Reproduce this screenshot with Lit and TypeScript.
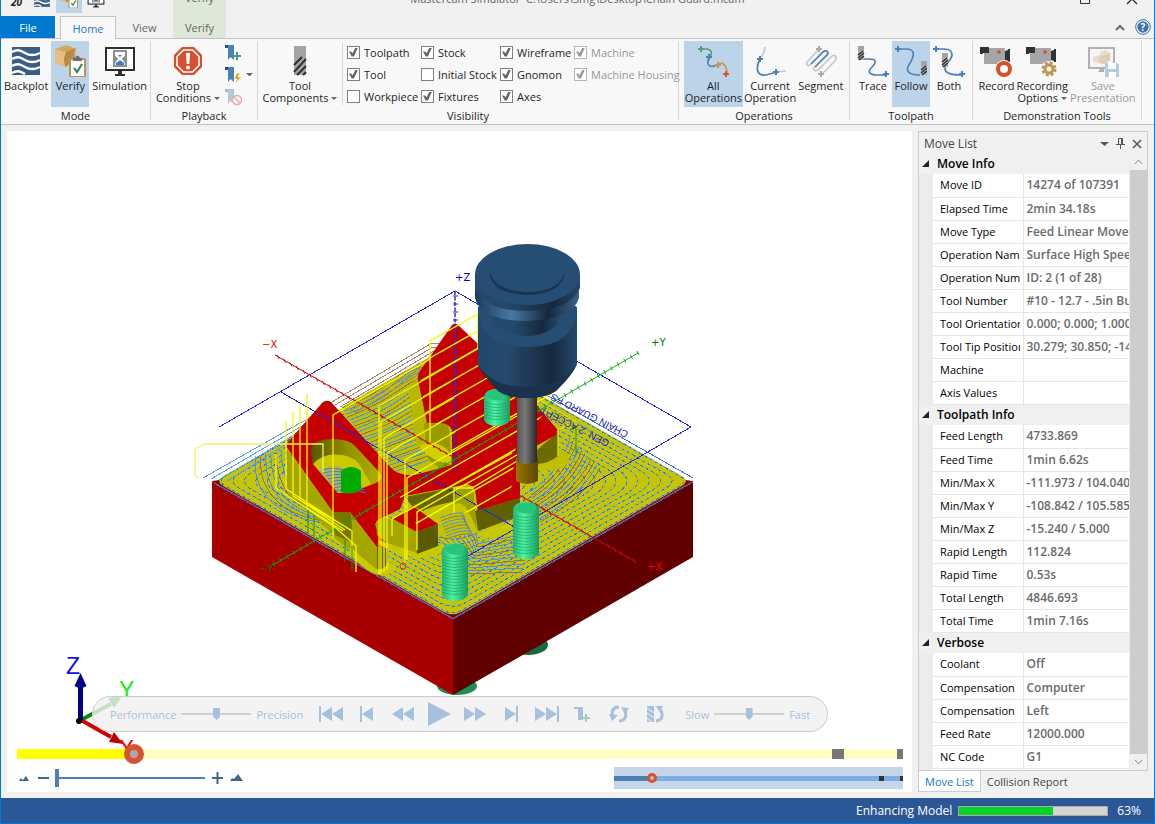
import { LitElement, html, svg, css } from "lit";
import { customElement, property, state } from "lit/decorators.js";
import { classMap } from "lit/directives/class-map.js";

const plus = (x: number, y: number, c: string, r = 3) =>
  svg`<path d="M${x - r} ${y}h${2 * r}M${x} ${y - r}v${2 * r}" stroke=${c} stroke-width="2" fill="none"/>`;

const bit = (x: number, y: number, h = 14) => svg`
  <rect x=${x} y=${y} width="6" height=${h} fill="#a3a3a3"/>
  <rect x=${x} y=${y + 5} width="6" height=${h - 5} fill="#b4b4b4"/>
  <path d="M${x} ${y + 9}l5-4M${x} ${y + 12}l6-5M${x + 1} ${y + h}l5-4" stroke="#333" stroke-width="1.6"/>`;

const camera = svg`
  <rect x="4" y="3" width="21" height="16" rx="1" fill="#a4a6a8"/>
  <path d="M0 2h9v6H3v1H0zM25 6l3-1V4h2v13h-2v-1l-3-1z" fill="#303234"/>
  <circle cx="19" cy="7" r="1.8" fill="#d94a28"/>`;

const bookmark = (o = 1) => svg`
  <g opacity=${o}><path d="M0 0h9v15l-3.500-3-2.500 3V3H0z" fill="#4a81b8"/><path d="M0 0h3v3H0z" fill="#294f78"/></g>`;

const icons: Record<string, unknown> = {
  backplot: svg`<rect x="2" y="2" width="28" height="28" fill="#385e86"/>
    <g fill="none" stroke="#fff" stroke-width="2.400">
    <path d="M2 7c5-3 8-2 13 1s9 3 15 0M2 14c5-3 8-2 13 1s9 3 15 0M2 21c5-3 8-2 13 1s9 3 15 0M2 28c5-3 8-2 13 1"/></g>`,
  verify: svg`<path d="M1 4L13 0l9 4-1 9-9 9-11-4z" fill="#d8a45c"/><path d="M1 4l11 3c0 5-1 5 0 15L1 18z" fill="#e6bd82"/>
    <path d="M12 7L22 3c-3 4-3 7-1 10l-9 9c-3-5-2-10 0-15z" fill="#b98746"/>
    <rect x="16" y="14" width="15" height="18" rx="1" fill="#fff" stroke="#b89555" stroke-width="2"/>
    <path d="M19 15v-2h2c1-3 4-3 5 0h2v3h-9z" fill="#6d6d6d"/><path d="M20 23l3 4 5-8" fill="none" stroke="#3f8468" stroke-width="2.200"/>`,
  simulation: svg`<rect x="2" y="3" width="28" height="22" fill="#fff" stroke="#2d2f32" stroke-width="2"/>
    <path d="M14 26h4v3h3v2H11v-2h3z" fill="#2d2f32"/><rect x="9" y="5" width="14" height="17" fill="#8b8d8f"/>
    <path d="M11 7h10v2c0 3-3 4-3 5s3 2 3 6H11c0-4 3-5 3-6s-3-2-3-5z" fill="#fff"/>
    <path d="M12 18l4-3 4 3v2h-8zM14 10h4l-2 2z" fill="#3d7fc4"/>`,
  stop: svg`<path d="M10 2h12l8 8v12l-8 8H10l-8-8V10z" fill="#d4502f"/>
    <path d="M11.500 5h9l6.500 6.500v9L20.500 27h-9L5 20.500v-9z" fill="none" stroke="#fff" stroke-width="1.600"/>
    <path d="M14 8h4l-.700 11h-2.600z" fill="#fff"/><circle cx="16" cy="22.500" r="2" fill="#fff"/>`,
  tool: svg`<rect x="10" y="1" width="12" height="29" fill="#a2a4a6"/><path d="M10 20l8-8M10 27l12-13M13 30l9-9M19 30l3-3" stroke="#303234" stroke-width="2"/>`,
  all: svg`<g fill="none" stroke-width="1.700"><path d="M4 4h6c6 1 5 6 2 9" stroke="#5c9b82"/>
    <path d="M12 13c-3 6 0 11 8 7" stroke="#4a81b8"/><path d="M20 20c6-4 10 0 10 9" stroke="#c39a4c"/></g>
    ${plus(4, 4, "#5c9b82")}${plus(12, 12, "#4a81b8")}${plus(21, 20, "#c39a4c")}${plus(29, 29, "#e0502c")}`,
  current: svg`<g fill="none" stroke-width="1.700"><path d="M11 2c0 6-3 8-5 12M22 27l10-1" stroke="#c5c8cb"/>
    <path d="M6 14C1 24 3 31 12 30l11-3" stroke="#4a81b8"/></g>${plus(6, 14, "#4a81b8")}${plus(22, 27, "#4a81b8")}`,
  segment: svg`<g fill="none" stroke-width="1.700"><path d="M14 4L3 16c-3 4 0 6 3 3M17 29l13-13c3-5-1-7-4-4L13 25c-4 2-6-1-3-4" stroke="#c5c8cb"/>
    <path d="M6 19L18 7c4-3 7 1 3 4L10 22" stroke="#4a81b8"/></g>${plus(14, 4, "#a9abad")}${plus(16, 29, "#a9abad")}`,
  trace: svg`<path d="M5 14h7c9 0 7 4 2 9-4 5 0 7 6 7h9" fill="none" stroke="#4a81b8" stroke-width="1.700"/>${bit(1, 1)}${plus(29, 29, "#4a81b8")}`,
  follow: svg`<path d="M3 4h8c9 0 9 6 4 14-5 7-3 12 10 12" fill="none" stroke="#4a81b8" stroke-width="1.700"/>${bit(26, 16)}${plus(3, 4, "#4a81b8")}`,
  both: svg`<path d="M3 4h7c10 0 11 6 6 12-8 9-4 14 12 14" fill="none" stroke="#4a81b8" stroke-width="1.700"/>${bit(9, 8)}${plus(3, 4, "#4a81b8")}${plus(29, 29, "#4a81b8")}`,
  record: svg`${camera}<circle cx="24" cy="24" r="9" fill="#f8f8f8"/><circle cx="24" cy="24" r="6" fill="#fff" stroke="#d94f2c" stroke-width="4"/>`,
  recopts: svg`${camera}<circle cx="23" cy="24" r="8" fill="#f8f8f8"/><circle cx="23" cy="24" r="6" fill="none" stroke="#bd9650" stroke-width="3" stroke-dasharray="2.700 2"/>
    <circle cx="23" cy="24" r="4" fill="none" stroke="#bd9650" stroke-width="3"/>`,
  save: svg`<rect x="2" y="3" width="25" height="20" fill="#f5f5f5" stroke="#b0b2b4" stroke-width="2"/><path d="M13 24h4v3H11z" fill="#b0b2b4"/>
    <path d="M6 12l7-2V7l6-2 4 3v7l-6 4-11-2z" fill="#e9dccb"/><path d="M12 12l6-2 5-2v7l-6 4-5-2z" fill="#dfcdb4"/>
    <path d="M18 18h12l2 2v12H18z" fill="#b3cae2"/><path d="M21 18h8v6h-8zM22 27h7v5h-7z" fill="#fff"/>`,
};
const icon = (n: string) => html`<svg class="ico" viewBox="0 0 32 32" aria-hidden="true">${icons[n]}</svg>`;

/* ---------- 3D scene ---------- */
const diamond = (w: number, h: number, t: number, cx = 452.5, cy = 481) => {
  const p = [[cx, cy - h], [cx + w, cy], [cx, cy + h], [cx - w, cy]];
  const mix = (a: number[], b: number[], k: number) => `${(a[0] + (b[0] - a[0]) * k).toFixed(1)} ${(a[1] + (b[1] - a[1]) * k).toFixed(1)}`;
  let d = "M" + mix(p[0], p[1], t);
  for (let i = 1; i <= 4; i++) {
    const a = p[(i + 3) % 4], b = p[i % 4], c = p[(i + 1) % 4];
    d += `L${mix(a, b, 1 - t)}Q${b[0]} ${b[1]} ${mix(b, c, t)}`;
  }
  return d + "Z";
};
const range = (n: number) => Array.from({ length: n }, (_, i) => i);

const bolt = (x: number, y: number, h: number) => svg`
  <path d="M${x} ${y + 8}q1-8 13-8t13 8v${h - 14}q-3 6-13 6t-13-6z" fill="url(#bolt)"/>
  <ellipse cx=${x + 13} cy=${y + 6} rx="10" ry="5.500" fill="#27c579"/>
  ${range(Math.floor((h - 18) / 3)).map((i) => svg`<path d="M${x} ${y + 13 + i * 3}q13 5 26 0" stroke="#189a60" stroke-width=".6" fill="none"/>`)}`;

const ticks = (x1: number, y1: number, x2: number, y2: number, n: number, c: string) =>
  range(n).map((i) => {
    const x = x1 + ((x2 - x1) * i) / (n - 1), y = y1 + ((y2 - y1) * i) / (n - 1);
    return svg`<path d="M${x - 1} ${y - 2}l2 4" stroke=${c} stroke-width="1"/>`;
  });

const hatch = (i: number) => (i % 3 === 1 ? "#97714a" : "#4d8fe0");

const scene = () => svg`
  <defs>
    <linearGradient id="steel"><stop offset="0" stop-color="#22486c"/><stop offset=".3" stop-color="#25496c"/><stop offset=".75" stop-color="#16293d"/><stop offset="1" stop-color="#26496a"/></linearGradient>
    <linearGradient id="rim"><stop offset="0" stop-color="#1d3a58"/><stop offset=".35" stop-color="#4778a5"/><stop offset=".7" stop-color="#16293d"/><stop offset="1" stop-color="#3a6288"/></linearGradient>
    <linearGradient id="shank"><stop offset="0" stop-color="#555"/><stop offset=".4" stop-color="#777"/><stop offset="1" stop-color="#282828"/></linearGradient>
    <linearGradient id="cut"><stop offset="0" stop-color="#9a7400"/><stop offset="1" stop-color="#5c4600"/></linearGradient>
    <linearGradient id="bolt"><stop offset="0" stop-color="#24b573"/><stop offset=".4" stop-color="#4bf5a4"/><stop offset="1" stop-color="#1c9d63"/></linearGradient>
    <linearGradient id="olive"><stop offset="0" stop-color="#555500"/><stop offset=".5" stop-color="#8f8f00"/><stop offset="1" stop-color="#b0b000"/></linearGradient>
    <clipPath id="top"><path d=${diamond(240, 137, 0.03)}/></clipPath>
    <clipPath id="upperRed"><path d="M455 323L419 371l8 53 22 0 3 40-60 30 26 32 50-14 42-12 6-56 41-44-47-55z"/></clipPath>
  </defs>

  <ellipse cx="457" cy="686" rx="20" ry="9" fill="#1f8f58"/><ellipse cx="528" cy="645" rx="20" ry="10" fill="#17693f"/>
  <path d="M212 481l241 137v77L212 557z" fill="#a80000"/>
  <path d="M453 618l240-137v76L453 695z" fill="#600000"/>
  <path d="M212 481l241-30 240 30-240 137z" fill="#800000"/>
  <path d=${diamond(238, 136, 0.04)} fill="#c6c600"/>
  <g fill="none" shape-rendering="crispEdges">
    ${range(17).map((i) => svg`<path d=${diamond(236 - i * 10, 134.5 - i * 5.7, 0.04 + i * 0.017)} stroke="#93a8b4"/>
      <path d=${diamond(236 - i * 10, 134.5 - i * 5.7, 0.04 + i * 0.017)} stroke="#1a7cf8" stroke-dasharray="3 3"/>`)}
    <path d="M545 394l148 84M453 619l240-137M214 483l239 136" stroke="#3d6fd8"/>
  </g>

  <g clip-path="url(#top)" fill="none" shape-rendering="crispEdges">
    <path d="M340 405L432 352l18 14-20 60 20 40-48 12-20-10z" fill="#bfbf08"/>
    ${range(24).map((i) => svg`<path d="M${340 + i * 2} ${405 + i * 3}q30 ${-12 + (i % 4)} 50-${28 - i / 2}t30-${18 - i / 2}" stroke=${hatch(i)}/>`)}
    ${range(9).map((i) => svg`<path d="M${256 + i * 5} ${456 - i}q${-4 + i} 24 12 42t50 24" stroke=${hatch(i)}/>`)}
    ${range(11).map((i) => svg`<path d="M${436 - i * 3} ${516 + i * 3}q20-8 30 2t${12 + i * 2} 26l54-${12 - i}" stroke=${hatch(i)}/>`)}
    ${range(11).map((i) => svg`<path d="M${530 + i} ${492 + i * 3}q${32 + i} -22 ${40 + i * 2}-54" stroke=${i % 3 ? "#97714a" : "#4d8fe0"}/>`)}
  </g>
  <g fill="none" shape-rendering="crispEdges">
  ${range(6).map((i) => svg`<path d="M${330 + i * 5} ${403 + i * 2}L${432 + i} ${343 + i * 4}h8" stroke="#a5856a"/>`)}
  ${range(4).map((i) => svg`<path d="M${203 + i * 8} ${478 + i}L${300 + i * 2} ${423 + i * 3}l20-10" stroke="#5b9bf0"/>`)}
  </g>

  <!-- upper boss -->
  <path d="M417 377l-7 10q-2 5 0 14l6 44 14 8 22 8-2-36-24-4z" fill="#b7b700"/>
  <path d="M424 424q14-8 24-2l4 44q-16 4-24-8z" fill="#999900"/>
  <path d="M419 446q20-8 32 8v10q-20-2-32-18z" fill="#d0d000"/>
  <path d="M516 455l24-10 18-14v16q12 6 11 14-4 12-40 8z" fill="#c0c000"/>
  <path d="M537 450l21-18v24q-8 7-21 8z" fill="#6b6b00"/>

  <!-- left boss walls -->
  <path d="M287 449l46 63h17l27 35 11-4v27q-4 4-12 2l-40-33q-18-22-36-34-14-10-13-20z" fill="#a6a600"/>
  <path d="M333 512q10-4 18 1l2 30-18-8z" fill="#777700"/>
  <path d="M377 547l11-4v27l-11 2z" fill="#626200"/>
  <path d="M350 547l26 22q10 2 12-8l9 6q-4 9-18 8-12-2-29-20z" fill="#caca00"/>

  <!-- top faces -->
  <path d="M452 325q3-3 6 0l52 49 46 54q3 4 0 7l-36 20v43l-43 13-4-25-27 2-46 10-15-22 30-1 37-9V430q-3-7-12-7h-13l-9-43q-1-5 2-9z" fill="#c60000"/>
  <path d="M288 449q-3-4 0-7l34-39q4-4 9-1l61 67q8 7 23 6l37-10 2 22-49 10-5 12-22 11q-5 4-1 9l13 17-13 1-27-35h-17z" fill="#c60000"/>
  <path d="M311 449q2-10 22-10 16 0 22 7l26 28q2 6-5 9l-26 10h-12l-26-32z" fill="url(#olive)"/>
  <path d="M313 464q10-12 30-9 14 3 18 12l10 17-20 9h-13z" fill="#c9c900"/>
  <path d="M319 471q12-8 24-3l14 10 6 8-13 7h-12z" fill="#b1b15a"/>
  ${range(8).map((i) => svg`<path d="M${322 + i * 2} ${470 + i * 3}q12-4 30 2" stroke="#3a7ed0" fill="none"/>`)}
  <path d="M341 471q10-8 20 0v19q-10 6-20 2z" fill="#00aa00"/>

  <!-- central pocket -->
  <path d="M405 496l48-9 14-3q8 2 9 12l4 36-34 6-30-10z" fill="#c4c400"/>
  <path d="M405 497l51-10 1 14q-24 4-34 10l-12-6z" fill="#666600"/>
  <path d="M456 488q18-6 18 8l3 35q-6-16-12-25-4-4-10-2z" fill="#9f9f00"/>
  <path d="M475 511l45-13v18l-42 15z" fill="#606000"/>
  <path d="M478 532l42-13 6 8-34 11q-10 0-14-6z" fill="#c8c800"/>
  ${range(8).map((i) => svg`<path d="M${440 + i} ${518 + i * 3}q14-6 23-5l${i} 7" stroke=${hatch(i)} fill="none"/>`)}
  <path d="M376 522q6-6 20-2l22 12v22q-30-8-41-19z" fill="#a5a500"/>
  <path d="M379 540l38 13 21-8 8 3q0 6-26 10-28-4-41-14z" fill="#c8c800"/>
  <path d="M417 532l21-8v22l-21 8z" fill="#5a5a00"/>
  <path d="M393 519l20-13 25 18-21 8z" fill="#c60000"/>

  <!-- overall box and axes -->
  <g fill="none" stroke="#2424e8" shape-rendering="crispEdges">
    <path d="M219 427L455 291l236 136-235 136M281 392l235 136"/>
  </g>
  <path d="M455 291v180" stroke="#3030c8" stroke-width="1.500" stroke-dasharray="4 1.500"/>
  ${range(22).map((i) => svg`<path d="M453 ${296 + i * 8}h5" stroke="#4020b0"/>`)}
  <path d="M275 355l361 207" stroke="#c80000"/>${ticks(278, 357, 634, 561, 56, "#b81010")}
  <path d="M271 566L638 353" stroke="#10b010"/>${ticks(274, 564, 638, 353, 56, "#10a010")}

  <!-- rapid and feed moves -->
  <g clip-path="url(#upperRed)" stroke="#ffff00" stroke-width="1.400">
    ${range(14).map((i) => svg`<path d="M400 ${375 + i * 17.5}L560 ${284 + i * 17.5}"/>`)}
  </g>
  <g fill="none" stroke="#f8f800" stroke-width="1.300">
    <path d="M195 449l10-5h118v28M195 449v26l4 3" stroke="#f2f260"/>
    <path d="M276 454v34l60 40 20 18v26"/>
    <path d="M286 421v68l66 42v26M293 412v84l58 34M300 404v96l45 30M307 394v114l36 23"/>
    <path d="M333 538V415l97-56v-18l48-27v34"/>
    <path d="M379 574V406l100-58M381 574V422l69-40M384 572V438l70-40M387 570V453l68-39M405 562V460l50-28M407 560v-82l110-62M392 536v-17l120-66M417 550v-38l107-61M430 358v84M454 513v-25h18l45-27"/>
    <path d="M540 400l36 22v24M558 456v-26l18-9" stroke="#e0e000"/>
  </g>
  <path d="M308 510v24M314 515v22M345 540v22M352 546v24M570 430l6-4v28" stroke="#109010" fill="none"/>
  <circle cx="403" cy="566" r="3" fill="none" stroke="#e03000"/>

  <g class="engrave">
    <text transform="translate(629 432) rotate(207)">CHAIN GUARD FS</text>
    <text transform="translate(610 441) rotate(207)">GEN. 2 ACCEPT</text>
  </g>

  ${bolt(484, 389, 37)}${bolt(513, 502, 57)}${bolt(442, 543, 58)}

  <!-- cutter and holder -->
  <path d="M516 458h22v23q-11 6-22 0z" fill="url(#cut)"/>
  <path d="M517 390h20v72q-10 4-20 0z" fill="url(#shank)"/>
  <path d="M478 308v57q2 5 20 26 10 7 29 7t29-7q18-20 21-27v-55z" fill="url(#steel)"/>
  <path d="M478 365q14 22 49 22t50-23q-4 11-21 27-10 7-29 7t-29-7q-18-20-20-26z" fill="#1a324b"/>
  <path d="M478 307q0 40 49 40t50-40l-17-10h-65z" fill="#264e74"/>
  <path d="M494 305v18q14 13 33 13t32-13v-18z" fill="url(#steel)"/>
  <path d="M475 285v13q6 23 52 23 46-2 52-23v-13z" fill="url(#rim)"/>
  <path d="M475 274v14q10 23 52 23 44-1 53-23v-14z" fill="url(#steel)"/>
  <ellipse cx="527.500" cy="274.500" rx="52.500" ry="30.500" fill="#264e74"/>
  <path d="M490 272q0 22 38 23 36-1 37-25-3 21-37 22-33-1-38-20z" fill="#1a3550"/>

  <g class="axis">
    <text x="262" y="348" fill="#e00000">−X</text><text x="647" y="570" fill="#f00000">+X</text>
    <text x="651" y="346" fill="#007000">+Y</text><text x="259" y="572" fill="#007000">−Y</text>
    <text x="455" y="281" fill="#0000e0">+Z</text>
  </g>

  <!-- gnomon -->
  <path d="M81 720l30-16" stroke="#009000" stroke-width="4"/><path d="M108 698l14-2-8 12z" fill="#00a000"/>
  <path d="M81 720l30 17" stroke="#d00000" stroke-width="4"/><path d="M114 732l9 12-14-2z" fill="#c00000"/>
  <path d="M80.500 720v-36" stroke="#000080" stroke-width="5"/><path d="M80.500 673l6 13q-6 4-12 0z" fill="#000088"/><circle cx="79" cy="721" r="3" fill="#000"/>
  <g class="gnomon"><text x="66" y="674" fill="#1010f0">Z</text><text x="119" y="698" fill="#10ee10">Y</text><text x="119" y="757" fill="#f00000">X</text></g>
`;

type Row = [string, string];
const sections: { name: string; rows: Row[] }[] = [
  { name: "Move Info", rows: [["Move ID", "14274 of 107391"], ["Elapsed Time", "2min 34.18s"], ["Move Type", "Feed Linear Move"], ["Operation Name", "Surface High Speed"], ["Operation Number", "ID: 2 (1 of 28)"], ["Tool Number", "#10 - 12.7 - .5in Bull"], ["Tool Orientation", "0.000; 0.000; 1.000"], ["Tool Tip Position", "30.279; 30.850; -14.2"], ["Machine", ""], ["Axis Values", ""]] },
  { name: "Toolpath Info", rows: [["Feed Length", "4733.869"], ["Feed Time", "1min 6.62s"], ["Min/Max X", "-111.973 / 104.040"], ["Min/Max Y", "-108.842 / 105.585"], ["Min/Max Z", "-15.240 / 5.000"], ["Rapid Length", "112.824"], ["Rapid Time", "0.53s"], ["Total Length", "4846.693"], ["Total Time", "1min 7.16s"]] },
  { name: "Verbose", rows: [["Coolant", "Off"], ["Compensation", "Computer"], ["Compensation", "Left"], ["Feed Rate", "12000.000"], ["NC Code", "G1"], ["", ""]] },
];

const base = css`
  * { box-sizing: border-box; }
  button, input { font: inherit; color: inherit; margin: 0; padding: 0; border: 0; background: none; }
  button { cursor: pointer; }
  svg { display: block; flex: none; }
`;

@customElement("ribbon-bar")
class RibbonBar extends LitElement {
  static styles = [base, css`
    :host { display: flex; background: #f8f8f8; border-top: 1px solid #c3c3c3; border-bottom: 1px solid #c3c3c3; height: 87px; padding: 2px 0 0; font-size: 11px; }
    .group { display: flex; flex-direction: column; border-right: 1px solid #d6d6d6; margin: 0 0 4px; }
    .items { display: flex; justify-content: center; flex: none; height: 66px; }
    .caption { text-align: center; line-height: 18px; flex: none; }
    .mode { width: 150px; } .playback { width: 107px; } .visibility { width: 421px; }
    .ops { width: 171px; } .path { width: 123px; } .demo { width: 169px; }
    .mode .big { padding: 4px 3px 0; } .path .big { width: 38px; }
    .big { display: flex; flex-direction: column; align-items: center; line-height: 12px; padding: 4px 1px 0; white-space: nowrap; }
    .big.on { background: #bbd4e9; }
    .big:disabled { color: #999; }
    .big span { margin-top: 3px; }
    .ico { width: 32px; height: 32px; }
    .arrow { display: inline-block; border: 3px solid transparent; border-top-color: #666; border-bottom: 0; margin: 0 0 2px 3px; }
    .small { display: grid; grid-template-columns: 18px 10px; row-gap: 5px; padding: 4px 0 0 4px; height: 64px; align-items: center; }
    .small svg { width: 18px; height: 17px; }
    .tools { width: 84px; display: flex; justify-content: center; flex: none; }
    .checks { display: grid; grid-template-columns: 74px 79px 74px minmax(0, 1fr); grid-auto-rows: 22px; padding-left: 4px; border-left: 1px solid #d6d6d6; margin-top: 2px; height: 62px; flex: 1; }
    label { display: flex; align-items: center; gap: 4px; white-space: nowrap; height: 18px; }
    input { appearance: none; width: 13px; height: 13px; border: 1px solid #808080; background: #fff; flex: none; }
    input:checked::before { content: ""; display: block; width: 9px; height: 9px; margin: 1px; background: #666; clip-path: polygon(0 45%, 22% 45%, 40% 65%, 72% 0, 100% 0, 55% 100%, 30% 100%); }
    .off { color: #999; } .off input { border-color: #b5b5b5; } .off input::before { background: #999 !important; }
  `];
  big(name: string, text: unknown, on = false, disabled = false) {
    return html`<button class=${classMap({ big: true, on })} ?disabled=${disabled}>${icon(name)}<span>${text}</span></button>`;
  }
  render() {
    const arrow = html`<i class="arrow"></i>`;
    const checks: [string, boolean, boolean?][] = [["Toolpath", true], ["Stock", true], ["Wireframe", true], ["Machine", true, true], ["Tool", true], ["Initial Stock", false], ["Gnomon", true], ["Machine Housing", true, true], ["Workpiece", false], ["Fixtures", true], ["Axes", true]];
    return html`
      <div class="group mode"><div class="items">${this.big("backplot", "Backplot")}${this.big("verify", "Verify", true)}${this.big("simulation", "Simulation")}</div><div class="caption">Mode</div></div>
      <div class="group playback"><div class="items">${this.big("stop", html`Stop<br>Conditions${arrow}`)}
        <div class="small">
          <button aria-label="Add bookmark"><svg viewBox="0 0 18 17">${bookmark()}${plus(12, 11, "#4d9a7b", 4)}</svg></button><i></i>
          <button aria-label="Insert stop"><svg viewBox="0 0 18 17">${bookmark()}<path d="M12 6l-3 6h3l-2 5 6-7h-3l2-4z" fill="#e0a400" stroke="#f8f8f8" stroke-width=".6"/></svg></button>${arrow}
          <button aria-label="Clear bookmarks" disabled><svg viewBox="0 0 18 17">${bookmark(0.4)}<circle cx="12" cy="11" r="4.500" fill="#f8f8f8" stroke="#ecaa9c" stroke-width="1.400"/><path d="M9 8l6 6" stroke="#ecaa9c" stroke-width="1.400"/></svg></button><i></i>
        </div></div><div class="caption">Playback</div></div>
      <div class="group visibility"><div class="items"><div class="tools">${this.big("tool", html`Tool<br>Components${arrow}`)}</div>
        <div class="checks">${checks.map(([t, c, d]) => html`<label class=${d ? "off" : ""}><input type="checkbox" .checked=${c} ?disabled=${!!d}>${t}</label>`)}</div></div>
        <div class="caption">Visibility</div></div>
      <div class="group ops"><div class="items">${this.big("all", html`All<br>Operations`, true)}${this.big("current", html`Current<br>Operation`)}${this.big("segment", "Segment")}</div><div class="caption">Operations</div></div>
      <div class="group path"><div class="items">${this.big("trace", "Trace")}${this.big("follow", "Follow", true)}${this.big("both", "Both")}</div><div class="caption">Toolpath</div></div>
      <div class="group demo"><div class="items">${this.big("record", "Record")}${this.big("recopts", html`Recording<br>Options${arrow}`)}${this.big("save", html`Save<br>Presentation`, false, true)}</div><div class="caption">Demonstration Tools</div></div>`;
  }
}

@customElement("sim-viewport")
class SimViewport extends LitElement {
  static styles = [base, css`
    :host { display: flex; flex-direction: column; justify-content: flex-end; position: relative; background: #fff; min-width: 0; padding: 0 9px 2px 10px; overflow: hidden; font-size: 11px; }
    .scene { position: absolute; inset: 0; width: 100%; height: 100%; }
    .axis { font: 10px "DejaVu Sans", sans-serif; } .gnomon { font: 23px "Liberation Sans", sans-serif; }
    .engrave { font: 10px "Liberation Sans", sans-serif; fill: #2222b8; }
    .player { position: relative; display: flex; align-items: center; align-self: center; height: 36px; margin-bottom: 12px; padding: 0 17px; border: 1px solid #ccc; border-radius: 18px; background: rgba(240, 240, 240, .82); }
    .speed { display: flex; align-items: center; gap: 5px; color: #a7c1dc; }
    .quality { margin-right: 10px; } .rate { margin-left: 12px; }
    .player button { width: 36px; height: 30px; display: grid; place-items: center; }
    .player button svg { width: 26px; height: 26px; fill: #a5c1de; }
    input { appearance: none; height: 20px; min-width: 0; }
    .speed input { width: 70px; background: linear-gradient(#d0d0d0, #d0d0d0) center / 100% 2px no-repeat; }
    .speed input::-webkit-slider-thumb { appearance: none; width: 7px; height: 12px; background: #a5c1de; clip-path: polygon(0 0, 100% 0, 100% 70%, 50% 100%, 0 70%); }
    .timeline { position: relative; display: flex; }
    .timeline input { flex: 1; background: linear-gradient(90deg, #ff0 13.2%, #ffffc4 13.2%) center / 100% 10px no-repeat; }
    .timeline input::-webkit-slider-thumb { appearance: none; width: 20px; height: 20px; border-radius: 50%; background: #aaa; border: 6px solid #d55332; }
    .mark { position: absolute; top: 5px; height: 10px; background: #777; }
    .m1 { width: 12px; left: 92%; } .m2 { width: 6px; right: 0; }
    .foot { position: relative; display: flex; justify-content: space-between; align-items: center; margin-top: 2px; height: 24px; }
    .zoom { display: flex; align-items: center; gap: 6px; color: #3e6f9f; }
    .zoom svg { fill: #43678b; }
    .zoom input { width: 150px; background: linear-gradient(#4c80b5, #4c80b5) center / 100% 2px no-repeat; }
    .zoom input::-webkit-slider-thumb { appearance: none; width: 4px; height: 18px; background: #4c80b5; }
    .mini { display: flex; position: relative; width: 289px; height: 22px; background: #c5d6e8; }
    .mini input { flex: 1; height: 22px; background: linear-gradient(90deg, #4c80b5 13%, #7baee6 13%) center / 100% 5px no-repeat; }
    .mini input::-webkit-slider-thumb { appearance: none; width: 10px; height: 10px; border-radius: 50%; background: #bbb; border: 3px solid #d55332; }
    .mini i { position: absolute; top: 9px; height: 5px; background: #333; } .n1 { width: 5px; right: 19px; } .n2 { width: 3px; right: 0; }
  `];
  render() {
    const b = (label: string, g: unknown) => html`<button aria-label=${label}><svg viewBox="0 0 26 26">${g}</svg></button>`;
    return html`
      <svg class="scene" viewBox="7 131 905 661" role="img" aria-label="Stock model with toolpath">${scene()}</svg>
      <div class="player">
        <label class="speed quality">Performance<input type="range" value="50">Precision</label>
        ${b("First", svg`<path d="M1 5h2v16H1zM14 6v14L3 13zM25 6v14l-11-7z"/>`)}
        ${b("Previous", svg`<path d="M6 5h2v16H6zM19 6v14L8 13z"/>`)}
        ${b("Rewind", svg`<path d="M13 6v14L2 13zM24 6v14l-11-7z"/>`)}
        ${b("Play", svg`<path d="M2 1l23 12L2 25z"/>`)}
        ${b("Forward", svg`<path d="M2 6v14l11-7zM13 6v14l11-7z"/>`)}
        ${b("Next", svg`<path d="M7 6v14l11-7zM18 5h2v16h-2z"/>`)}
        ${b("Last", svg`<path d="M1 6v14l11-7zM12 6v14l11-7zM23 5h2v16h-2z"/>`)}
        ${b("Add bookmark", svg`<path d="M4 6h9v13h-5V8H4z"/>${plus(16, 17, "#a4ccb8", 4)}`)}
        ${b("Loop", svg`<g fill="none" stroke="#a5c1de" stroke-width="3"><path d="M13 6c-6 0-8 4-6 9M13 20c6 0 8-5 6-10"/></g><path d="M3 13l9 1-6 6zM15 6l8 1-4 6z"/>`)}
        ${b("Swap tool", svg`<path d="M5 5h7v16H5z"/><path d="M5 12l7 5M5 7l7 5M5 17l5 4" stroke="#f3f3f3"/><path d="M14 20c7-1 7-6 5-11" fill="none" stroke="#a5c1de" stroke-width="3"/><path d="M14 5h7l-3 7z"/>`)}
        <label class="speed rate">Slow<input type="range" value="50">Fast</label>
      </div>
      <div class="timeline"><input type="range" aria-label="Timeline" min="0" max="1000" value="124"><i class="mark m1"></i><i class="mark m2"></i></div>
      <div class="foot">
        <label class="zoom"><svg width="14" height="8"><path d="M2 7l2-3 2 2 3-4 3 5z"/></svg>
          <svg width="12" height="12"><path d="M1 5h11v2H1z"/></svg><input type="range" value="0" aria-label="Zoom">
          <svg width="12" height="12"><path d="M1 5h11v2H1zM5.500 0h2v12h-2z"/></svg>
          <svg width="16" height="10"><path d="M1 8l2-3 2 1 4-5 5 7z"/></svg></label>
        <div class="mini"><input type="range" aria-label="Range" value="12"><i class="n1"></i><i class="n2"></i></div>
      </div>`;
  }
}

@customElement("move-list")
class MoveList extends LitElement {
  @property({ attribute: false }) data = sections;
  static styles = [base, css`
    :host { display: flex; flex-direction: column; min-height: 0; font-size: 12px; }
    .panel { display: flex; flex-direction: column; flex: 1; min-height: 0; border: 1px solid #ccc; }
    .title { display: flex; align-items: center; height: 21px; padding: 2px 5px 0 5px; color: #444; font-size: 12px; gap: 7px; }
    .title span { flex: 1; }
    .body { display: flex; flex: 1; min-height: 0; }
    .view { flex: 1; overflow: hidden; min-width: 0; }
    table { width: 100%; border-collapse: collapse; table-layout: fixed; background: #fff; }
    .gut { width: 14px; } .name { width: 90px; }
    .head th { height: 21px; background: #f0f0f0; text-align: left; padding: 0 3px; font-weight: 600; }
    .head button { display: flex; align-items: center; gap: 8px; font-weight: 600; color: #000; }
    td, tr.row th { height: 23px; line-height: 22px; padding: 0; overflow: hidden; white-space: nowrap; border-bottom: 1px solid #e6e6e6; }
    tr.row th { font-weight: 400; text-align: left; border-right: 1px solid #e6e6e6; }
    tr.row th div { margin: 0 3px 0 7px; overflow: hidden; font-size: 11px; color: #000; }
    td.g { background: #ececec; border-color: #ececec; } td.v { color: #6b6b6b; font-weight: 600; padding-left: 3px; }
    .bar { width: 18px; display: flex; flex-direction: column; align-items: center; background: #f0f0f0; padding: 2px 0; border-left: 1px solid #ececec; }
    .thumb { flex: 1; align-self: stretch; background: #cdcdcd; margin: 2px 0 20px; }
    .bar button { height: 13px; }
    .tabs { display: flex; height: 21px; font-size: 11px; color: #444; }
    .tabs button { padding: 0 6px; }
    .tabs .sel { background: #fff; color: #1a75c4; border: 1px solid #ccc; border-top: 0; }
    .foot { height: 13px; margin-top: -19px; }
  `];
  render() {
    return html`
      <div class="panel">
        <div class="title"><span>Move List</span>
          <button aria-label="Menu"><svg width="9" height="6"><path d="M0 1h9L4.500 5z" fill="#555"/></svg></button>
          <button aria-label="Pin"><svg width="9" height="12" fill="none" stroke="#555"><path d="M2.500.5h4v6h-4zM0 6.500h9M4.500 6.500V11M5.500 1v5"/></svg></button>
          <button aria-label="Close"><svg width="10" height="10"><path d="M1 1l8 8M9 1l-8 8" stroke="#555" stroke-width="1.500"/></svg></button></div>
        <div class="body">
          <div class="view"><table>
            <colgroup><col class="gut"><col class="name"><col></colgroup>
            ${this.data.map((s) => html`<tbody>
              <tr class="head"><th colspan="3"><button><svg width="7" height="7"><path d="M7 0v7H0z" fill="#222"/></svg>${s.name}</button></th></tr>
              ${s.rows.map(([k, v]) => html`<tr class="row"><td class="g"></td><th><div>${k}</div></th><td class="v">${v}</td></tr>`)}
            </tbody>`)}
          </table></div>
          <div class="bar">
            <button aria-label="Scroll up"><svg width="9" height="12"><path d="M1 8l3.500-4L8 8" fill="none" stroke="#888"/></svg></button>
            <div class="thumb"></div>
            <button class="foot" aria-label="Scroll down"><svg width="9" height="12"><path d="M1 4l3.500 4L8 4" fill="none" stroke="#888"/></svg></button>
          </div>
        </div>
      </div>
      <div class="tabs"><button class="sel">Move List</button><button>Collision Report</button></div>`;
  }
}

@customElement("app-root")
class AppRoot extends LitElement {
  @state() progress = 63;
  static styles = [base, css`
    :host { display: block; height: 100vh; overflow: hidden; font-family: "Open Sans", "Noto Sans", sans-serif; color: #1e1e1e; }
    .window { display: flex; flex-direction: column; margin-top: -20px; height: calc(100vh + 20px); background: #f1f1f1; border: 1px solid #0078d7; }
    .head { display: grid; grid-template-columns: 172px 53px 1fr; }
    .quick { display: flex; height: 35px; align-items: center; padding-left: 4px; gap: 1px; }
    .quick button { width: 26px; height: 28px; display: grid; place-items: center; } .quick .on { background: #bbd4e9; }
    .quick svg { width: 18px; height: 18px; } .app { width: 23px; font: italic 700 10px "Open Sans", sans-serif; text-align: center; padding-top: 6px; }
    .context { background: #dde8d8; display: flex; flex-direction: column; align-items: center; font-size: 11px; color: #666; }
    .context span { height: 35px; line-height: 34px; } .context button { height: 22px; }
    .title { display: flex; justify-content: center; align-items: center; height: 35px; font-size: 11px; color: #666; position: relative; padding-right: 225px; }
    .ctl { position: absolute; right: 16px; top: 0; display: flex; gap: 36px; height: 35px; align-items: center; }
    .tabs { display: flex; height: 22px; font-size: 11px; color: #666; }
    .tabs .file { width: 54px; background: #0078d0; color: #fff; }
    .tabs .home { width: 56px; margin: 0 0 -1px 5px; background: #f8f8f8; border: 1px solid #c3c3c3; border-bottom: 0; color: #1a75c4; position: relative; }
    .tabs .view { width: 57px; }
    .help { display: flex; justify-content: flex-end; align-items: center; gap: 10px; height: 22px; padding-right: 3px; }
    .main { flex: 1; display: grid; grid-template-columns: 1fr 230px; column-gap: 6px; padding: 6px; min-height: 0; }
    .status { height: 25px; background: #2b5797; color: #fff; display: flex; justify-content: flex-end; align-items: center; gap: 6px; padding-right: 13px; font-size: 12px; }
    progress { appearance: none; width: 150px; height: 10px; border: 1px solid #aaa; background: #d4d4d4; }
    progress::-webkit-progress-bar { background: #d4d4d4; } progress::-webkit-progress-value { background: #06d32a; }
    .pct { margin-left: 3px; }
  `];
  render() {
    return html`<div class="window">
      <div class="head">
        <div><div class="quick"><div class="app">20</div><button aria-label="Backplot">${icon("backplot")}</button><button class="on" aria-label="Verify">${icon("verify")}</button><button aria-label="Simulation">${icon("simulation")}</button></div>
          <div class="tabs"><button class="file">File</button><button class="home">Home</button><button class="view">View</button></div></div>
        <div class="context"><span>Verify</span><button>Verify</button></div>
        <div><div class="title">Mastercam Simulator&nbsp; C:\\Users\\Smg\\Desktop\\Chain Guard.mcam
            <div class="ctl"><svg width="10" height="10"><path d="M.5.5h9v9h-9z" fill="none" stroke="#333"/></svg><svg width="12" height="12"><path d="M1 1l10 10M11 1L1 11" stroke="#333" stroke-width="1.400"/></svg></div></div>
          <div class="help"><svg width="10" height="7"><path d="M1 6l4-4 4 4" fill="none" stroke="#666" stroke-width="2"/></svg>
            <svg width="16" height="16"><circle cx="8" cy="8" r="7.300" fill="#fff" stroke="#3a6da8"/><circle cx="8" cy="8" r="5.700" fill="#3d72ae"/><text x="8" y="12" text-anchor="middle" font-size="10" font-weight="700" fill="#fff">?</text></svg></div></div>
      </div>
      <ribbon-bar></ribbon-bar>
      <div class="main"><sim-viewport></sim-viewport><move-list></move-list></div>
      <div class="status"><label for="p">Enhancing Model</label><progress id="p" max="100" .value=${this.progress}></progress><span class="pct">${this.progress}%</span></div>
    </div>`;
  }
}
